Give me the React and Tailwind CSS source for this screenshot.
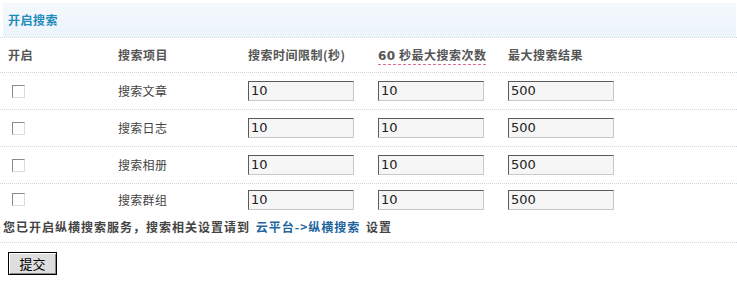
import React from "react";

const rows = ["搜索文章", "搜索日志", "搜索相册", "搜索群组"];

function Input({ value }) {
  return (
    <div className="flex h-[20px] w-[106px] items-center border border-t-[#5a5a5a] border-l-[#5a5a5a] border-r-[#c8c8c8] border-b-[#c8c8c8] bg-[#f6f6f6] pl-[2px] text-[13px] tracking-normal text-[#222] [font-family:'DejaVu_Sans',Verdana,sans-serif]">
      {value}
    </div>
  );
}

function Check() {
  return (
    <div className="ml-[4px] h-[13px] w-[13px] border border-t-[#8a8a8a] border-l-[#8a8a8a] border-r-[#dcdcdc] border-b-[#dcdcdc] bg-white" />
  );
}

export default function App() {
  return (
    <div className="w-[737px] bg-white text-[12px] text-[#444] [font-family:'Noto_Sans_CJK_SC','Noto_Sans',sans-serif]">
      <div className="pt-[3px] border-b border-dotted border-[#ccd8df]">
        <div className="ml-[3px] mr-[1px] flex h-[34px] items-center bg-gradient-to-b from-[#f5f9fd] to-[#ebf3fb] pl-[5px] font-bold tracking-[0.5px] text-[#1f8cbc]">
          开启搜索
        </div>
      </div>

      <div className="grid h-[35px] grid-cols-[110px_130px_130px_130px_1fr] items-center border-b border-dotted border-[#ccd8df] pl-[8px] font-bold tracking-[0.5px] text-[#555]">
        <div>开启</div>
        <div>搜索项目</div>
        <div>搜索时间限制(秒)</div>
        <div>
          <span className="border-b border-dashed border-[#e0708a] pb-[1px]">
            <span className="[font-family:'DejaVu_Sans',sans-serif]">60</span> 秒最大搜索次数
          </span>
        </div>
        <div>最大搜索结果</div>
      </div>

      {rows.map((r, i) => (
        <div
          key={r}
          className={
            "grid grid-cols-[110px_130px_130px_130px_1fr] items-center pl-[8px] " +
            (i < 3 ? "h-[37px] border-b border-dotted border-[#ccd8df]" : "h-[31px]")
          }
        >
          <div>
            <Check />
          </div>
          <div className="tracking-[0.3px]">{r}</div>
          <div>
            <Input value="10" />
          </div>
          <div>
            <Input value="10" />
          </div>
          <div>
            <Input value="500" />
          </div>
        </div>
      ))}

      <div className="h-[28px] border-b border-dotted border-[#ccd8df] pl-[3px] pt-[4px] font-bold leading-[16px] tracking-[1px] text-[#444]">
        您已开启纵横搜索服务，搜索相关设置请到{" "}
        <span className="ml-[2px] text-[#22649c]">云平台-&gt;纵横搜索</span>{" "}
        <span className="ml-[2px]">设置</span>
      </div>

      <div className="pl-[8px] pt-[9px] pb-[25px]">
        <button className="flex h-[23px] w-[49px] items-center justify-center border border-black bg-[#dedede] text-[13px] text-black shadow-[inset_1px_1px_0_#ffffff,inset_-1px_-1px_0_#888888]">
          提交
        </button>
      </div>
    </div>
  );
}
